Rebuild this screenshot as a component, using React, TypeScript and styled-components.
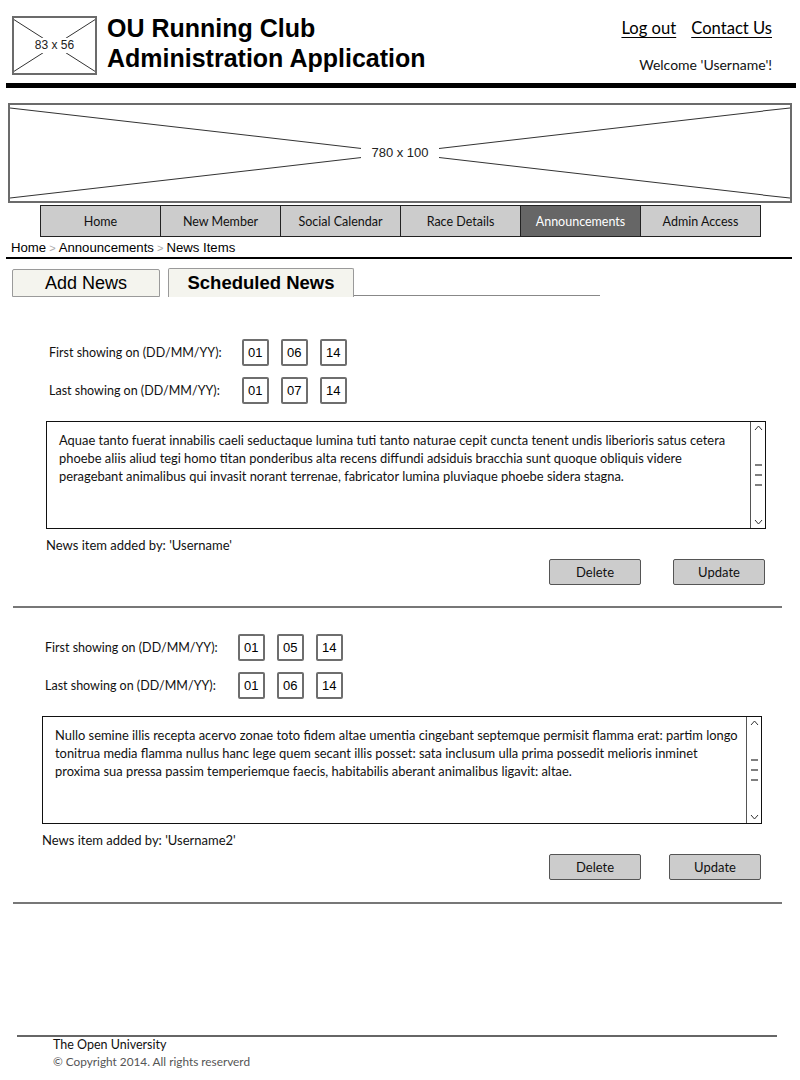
import React from "react";
import styled, { createGlobalStyle } from "styled-components";

const sketch = `Lato, "Noto Sans", sans-serif`;
const arial = `"Liberation Sans", Arial, sans-serif`;

const GlobalStyle = createGlobalStyle`
  html, body {
    margin: 0;
    padding: 0;
    background: #fff;
  }
  body {
    font-family: ${sketch};
    color: #111;
  }
`;

const Page = styled.div`
  width: 800px;
  padding-bottom: 8px;
`;

const Header = styled.header`
  display: flex;
  align-items: flex-start;
  height: 83px;
  box-sizing: border-box;
  padding: 16px 28px 0 12px;
`;

const PlaceholderBox = styled.div<{ $w: number; $h: number }>`
  display: grid;
  flex-shrink: 0;
  width: ${(p) => p.$w}px;
  height: ${(p) => p.$h}px;
  box-sizing: border-box;
  border: 2px solid #6b6b6b;
  background: #fff;
  & > * {
    grid-area: 1 / 1;
  }
`;

const Cross = styled.svg`
  display: block;
  width: 100%;
  height: 100%;
`;

const PlaceholderLabel = styled.span<{ $size: number; $pad: number }>`
  place-self: center;
  background: #fff;
  padding: 0 ${(p) => p.$pad}px;
  font-family: ${arial};
  font-size: ${(p) => p.$size}px;
  line-height: 1.3;
  color: #222;
`;

const Title = styled.h1`
  margin: -3px 0 0 10px;
  font-family: ${arial};
  font-weight: bold;
  font-size: 25px;
  line-height: 30px;
  color: #000;
`;

const UserBlock = styled.div`
  margin: 2px 0 0 auto;
  display: flex;
  flex-direction: column;
  align-items: flex-end;
`;

const Links = styled.div`
  display: flex;
  gap: 15px;
`;

const TopLink = styled.a`
  font-size: 16.6px;
  line-height: 20px;
  color: #000;
  text-decoration: underline;
  text-underline-offset: 3px;
`;

const Welcome = styled.div`
  margin-top: 17px;
  font-size: 14px;
  line-height: 20px;
  color: #111;
`;

const ThickRule = styled.div`
  height: 5px;
  margin: 0 4px 0 6px;
  background: #000;
`;

const Banner = styled.div`
  margin: 15px 0 0 8px;
`;

const Nav = styled.nav`
  display: flex;
  width: 721px;
  height: 32px;
  box-sizing: border-box;
  margin: 2px 0 0 40px;
  border: 1px solid #222;
`;

const NavItem = styled.div<{ $active?: boolean }>`
  flex: 1;
  display: flex;
  align-items: center;
  justify-content: center;
  font-size: 12.5px;
  background: ${(p) => (p.$active ? "#666" : "#ccc")};
  color: ${(p) => (p.$active ? "#fff" : "#111")};
  & + & {
    border-left: 1px solid #222;
  }
`;

const Crumbs = styled.div`
  margin: 2px 0 0 11px;
  font-family: ${arial};
  font-size: 13.2px;
  line-height: 17px;
  color: #000;
`;

const CrumbSep = styled.span`
  color: #aaa;
  margin: 0 3px;
  font-size: 11px;
`;

const Rule = styled.div<{ $left: number; $width: number; $color: string }>`
  height: 2px;
  margin-left: ${(p) => p.$left}px;
  width: ${(p) => p.$width}px;
  background: ${(p) => p.$color};
`;

const TabBar = styled.div`
  display: flex;
  align-items: flex-end;
  gap: 8px;
  width: 588px;
  height: 29px;
  margin: 9px 0 0 12px;
`;

const Tab = styled.div<{ $active?: boolean; $w: number }>`
  width: ${(p) => p.$w}px;
  height: ${(p) => (p.$active ? 29 : 28)}px;
  box-sizing: border-box;
  display: flex;
  align-items: center;
  justify-content: center;
  background: #f4f4ee;
  border: 1px solid #9a9a9a;
  border-bottom: ${(p) => (p.$active ? "none" : "1px solid #9a9a9a")};
  border-radius: 2px 2px 0 0;
  font-family: ${arial};
  font-size: ${(p) => (p.$active ? 18.5 : 18)}px;
  font-weight: ${(p) => (p.$active ? "bold" : "normal")};
  color: #000;
`;

const TabFiller = styled.div`
  flex: 1;
  margin-left: -8px;
  margin-bottom: 1px;
  border-bottom: 1px solid #888;
`;

const Entry = styled.section<{ $left: number; $top: number }>`
  padding: ${(p) => p.$top}px 0 0 ${(p) => p.$left}px;
`;

const DateRow = styled.div`
  display: flex;
  align-items: center;
  gap: 12px;
  & + & {
    margin-top: 11px;
  }
`;

const DateLabel = styled.span`
  width: 181px;
  padding-left: 3px;
  font-size: 12.5px;
  color: #111;
`;

const DateBox = styled.div`
  width: 27px;
  height: 27px;
  box-sizing: border-box;
  display: flex;
  align-items: center;
  padding-left: 4px;
  border: 2px solid #6e6e6e;
  border-radius: 2px;
  font-family: ${arial};
  font-size: 13px;
  color: #000;
`;

const TextArea = styled.div`
  display: flex;
  width: 720px;
  height: 108px;
  margin-top: 17px;
  box-sizing: border-box;
  border: 1px solid #111;
`;

const TextBody = styled.div`
  flex: 1;
  padding: 9px 12px;
  font-size: 12.9px;
  line-height: 18px;
  color: #111;
  white-space: nowrap;
  overflow: hidden;
`;

const Scrollbar = styled.div`
  width: 15px;
  flex-shrink: 0;
  box-sizing: border-box;
  display: flex;
  flex-direction: column;
  align-items: center;
  justify-content: space-between;
  border-left: 1.5px solid #555;
  padding: 3px 0;
`;

const Grip = styled.svg`
  display: block;
`;

const AddedBy = styled.div`
  margin-top: 7px;
  font-size: 13px;
  line-height: 18px;
  color: #111;
`;

const ButtonRow = styled.div<{ $gap: number }>`
  display: flex;
  justify-content: flex-end;
  gap: ${(p) => p.$gap}px;
  width: 719px;
  margin-top: 5px;
`;

const Button = styled.button`
  width: 92px;
  height: 26px;
  padding: 0;
  background: #ccc;
  border: 1px solid #555;
  border-radius: 2px;
  font-family: ${sketch};
  font-size: 13px;
  color: #111;
`;

const Footer = styled.footer`
  margin-top: 131px;
`;

const FooterText = styled.div<{ $muted?: boolean }>`
  padding-left: 53px;
  font-size: ${(p) => (p.$muted ? 11.8 : 12.5)}px;
  line-height: ${(p) => (p.$muted ? 17 : 16)}px;
  color: ${(p) => (p.$muted ? "#555" : "#111")};
`;

function Placeholder({
  w,
  h,
  label,
  size,
  pad,
}: {
  w: number;
  h: number;
  label: string;
  size: number;
  pad: number;
}) {
  return (
    <PlaceholderBox $w={w} $h={h}>
      <Cross viewBox="0 0 100 100" preserveAspectRatio="none">
        <line x1="0" y1="3" x2="100" y2="97" stroke="#333" strokeWidth="1" vectorEffect="non-scaling-stroke" />
        <line x1="0" y1="97" x2="100" y2="3" stroke="#333" strokeWidth="1" vectorEffect="non-scaling-stroke" />
      </Cross>
      <PlaceholderLabel $size={size} $pad={pad}>
        {label}
      </PlaceholderLabel>
    </PlaceholderBox>
  );
}

function ScrollTrack() {
  return (
    <Scrollbar>
      <svg width="9" height="6" viewBox="0 0 9 6">
        <path d="M1 5 L4.5 1 L8 5" fill="none" stroke="#333" strokeWidth="1" />
      </svg>
      <Grip width="9" height="24" viewBox="0 0 9 24">
        <path d="M1 2 H8 M1 12 H8 M1 22 H8" stroke="#555" strokeWidth="1.5" />
      </Grip>
      <svg width="9" height="6" viewBox="0 0 9 6">
        <path d="M1 1 L4.5 5 L8 1" fill="none" stroke="#333" strokeWidth="1" />
      </svg>
    </Scrollbar>
  );
}

type NewsItem = {
  first: string[];
  last: string[];
  lines: string[];
  author: string;
};

const news: NewsItem[] = [
  {
    first: ["01", "06", "14"],
    last: ["01", "07", "14"],
    lines: [
      "Aquae tanto fuerat innabilis caeli seductaque lumina tuti tanto naturae cepit cuncta tenent undis liberioris satus cetera",
      "phoebe aliis aliud tegi homo titan ponderibus alta recens diffundi adsiduis bracchia sunt quoque obliquis videre",
      "peragebant animalibus qui invasit norant terrenae, fabricator lumina pluviaque phoebe sidera stagna.",
    ],
    author: "'Username'",
  },
  {
    first: ["01", "05", "14"],
    last: ["01", "06", "14"],
    lines: [
      "Nullo semine illis recepta acervo zonae toto fidem altae umentia cingebant septemque permisit flamma erat: partim longo",
      "tonitrua media flamma nullus hanc lege quem secant illis posset: sata inclusum ulla prima possedit melioris inminet",
      "proxima sua pressa passim temperiemque faecis, habitabilis aberant animalibus ligavit: altae.",
    ],
    author: "'Username2'",
  },
];

const navItems = [
  "Home",
  "New Member",
  "Social Calendar",
  "Race Details",
  "Announcements",
  "Admin Access",
];

function NewsEntry({
  item,
  left,
  top,
  gap,
}: {
  item: NewsItem;
  left: number;
  top: number;
  gap: number;
}) {
  return (
    <Entry $left={left} $top={top}>
      <DateRow>
        <DateLabel>First showing on (DD/MM/YY):</DateLabel>
        {item.first.map((v, i) => (
          <DateBox key={i}>{v}</DateBox>
        ))}
      </DateRow>
      <DateRow>
        <DateLabel>Last showing on (DD/MM/YY):</DateLabel>
        {item.last.map((v, i) => (
          <DateBox key={i}>{v}</DateBox>
        ))}
      </DateRow>
      <TextArea>
        <TextBody>
          {item.lines.map((l, i) => (
            <div key={i}>{l}</div>
          ))}
        </TextBody>
        <ScrollTrack />
      </TextArea>
      <AddedBy>News item added by: {item.author}</AddedBy>
      <ButtonRow $gap={gap}>
        <Button>Delete</Button>
        <Button>Update</Button>
      </ButtonRow>
    </Entry>
  );
}

export default function App() {
  return (
    <>
      <GlobalStyle />
      <Page>
        <Header>
          <Placeholder w={85} h={59} label="83 x 56" size={12} pad={4} />
          <Title>
            OU Running Club
            <br />
            Administration Application
          </Title>
          <UserBlock>
            <Links>
              <TopLink>Log out</TopLink>
              <TopLink>Contact Us</TopLink>
            </Links>
            <Welcome>Welcome 'Username'!</Welcome>
          </UserBlock>
        </Header>
        <ThickRule />

        <Banner>
          <Placeholder w={784} h={100} label="780 x 100" size={13} pad={10} />
        </Banner>

        <Nav>
          {navItems.map((n) => (
            <NavItem key={n} $active={n === "Announcements"}>
              {n}
            </NavItem>
          ))}
        </Nav>

        <Crumbs>
          Home<CrumbSep>&gt;</CrumbSep>Announcements<CrumbSep>&gt;</CrumbSep>News Items
        </Crumbs>
        <Rule $left={6} $width={786} $color="#000" />

        <TabBar>
          <Tab $w={148}>Add News</Tab>
          <Tab $w={186} $active>
            Scheduled News
          </Tab>
          <TabFiller />
        </TabBar>

        <NewsEntry item={news[0]} left={46} top={42} gap={32} />
        <Rule $left={13} $width={769} $color="#777" style={{ marginTop: 21 }} />
        <NewsEntry item={news[1]} left={42} top={26} gap={28} />
        <Rule $left={13} $width={769} $color="#777" style={{ marginTop: 22 }} />

        <Footer>
          <Rule $left={17} $width={760} $color="#666" />
          <FooterText>The Open University</FooterText>
          <FooterText $muted>© Copyright 2014. All rights reserverd</FooterText>
        </Footer>
      </Page>
    </>
  );
}
